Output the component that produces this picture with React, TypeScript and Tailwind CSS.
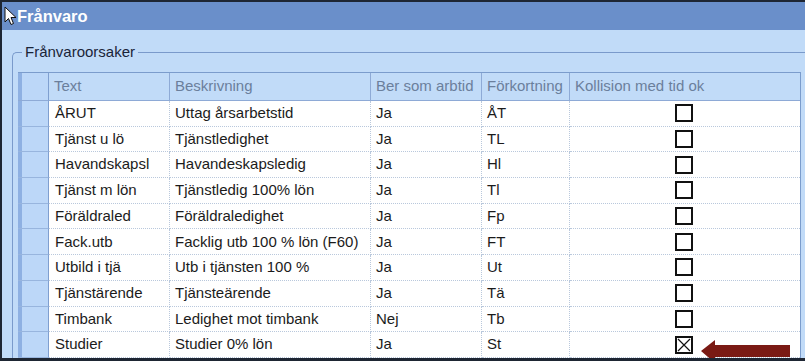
const ROWS = [
  { text: 'ÅRUT', desc: 'Uttag årsarbetstid', ber: 'Ja', fork: 'ÅT', ok: false },
  { text: 'Tjänst u lö', desc: 'Tjänstledighet', ber: 'Ja', fork: 'TL', ok: false },
  { text: 'Havandskapsl', desc: 'Havandeskapsledig', ber: 'Ja', fork: 'Hl', ok: false },
  { text: 'Tjänst m lön', desc: 'Tjänstledig 100% lön', ber: 'Ja', fork: 'Tl', ok: false },
  { text: 'Föräldraled', desc: 'Föräldraledighet', ber: 'Ja', fork: 'Fp', ok: false },
  { text: 'Fack.utb', desc: 'Facklig utb 100 % lön (F60)', ber: 'Ja', fork: 'FT', ok: false },
  { text: 'Utbild i tjä', desc: 'Utb i tjänsten 100 %', ber: 'Ja', fork: 'Ut', ok: false },
  { text: 'Tjänstärende', desc: 'Tjänsteärende', ber: 'Ja', fork: 'Tä', ok: false },
  { text: 'Timbank', desc: 'Ledighet mot timbank', ber: 'Nej', fork: 'Tb', ok: false },
  { text: 'Studier', desc: 'Studier 0% lön', ber: 'Ja', fork: 'St', ok: true },
];

const HEADERS = ['Text', 'Beskrivning', 'Ber som arbtid', 'Förkortning', 'Kollision med tid ok'];

function RowHeader({ header }: { header?: boolean }) {
  return (
    <div className={`flex h-full border-r border-[#7f9fd0] ${header ? 'border-b border-b-[#8eaad6]' : 'border-b border-b-[#98b5de]'}`}>
      <div className="w-[4px] h-full bg-[#8eb0e2]" />
      <div className="flex-1 h-full bg-[#bcd7f8]" />
    </div>
  );
}

function Checkbox({ checked }: { checked: boolean }) {
  return (
    <svg width="18" height="18" viewBox="0 0 18 18">
      <rect x="1" y="1" width="16" height="16" fill="white" stroke="#111" strokeWidth="2" />
      {checked && <path d="M3 3 L15 15 M15 3 L3 15" stroke="#111" strokeWidth="1.2" />}
    </svg>
  );
}

export default function App() {
  return (
    <div
      className="relative w-[805px] h-[361px] overflow-hidden bg-[#c1dbf8] border-t-2 border-l-2 border-b-[3px] border-[#1e2633]"
      style={{ fontFamily: '"Liberation Sans", Arial, sans-serif' }}
    >
      {/* title bar */}
      <div className="h-[28px] bg-[#6a8fca] flex items-center pl-[15px]">
        <span className="text-white font-bold text-[16.5px] leading-none">Frånvaro</span>
      </div>
      <svg className="absolute left-[2px] top-[4px]" width="14" height="20" viewBox="0 0 14 20">
        <path d="M1 1 L1 16 L4.5 12.5 L7 18.5 L9.5 17.5 L7 11.5 L12 11.5 Z" fill="white" stroke="#111" strokeWidth="1" strokeLinejoin="round" />
      </svg>

      {/* group box */}
      <div className="relative ml-[10px] mt-[22px] border-t border-l border-[#7a9acb] rounded-tl-[5px] pl-[5px] pt-[19px]">
        <span className="absolute left-[9px] -top-[10px] px-[3px] bg-[#c1dbf8] text-[15px] leading-[18px] text-[#1a2438]">
          Frånvaroorsaker
        </span>

        <div className="w-[783px] border-t border-r border-[#7b9ccc]">
          {/* header */}
          <div className="grid grid-cols-[31px_121px_201px_111px_88px_230px] h-[28px]">
            <RowHeader header />
            {HEADERS.map((h) => (
              <div
                key={h}
                className="flex items-center pl-[5px] border-r border-b border-[#8eaad6] text-[15px] text-[#6b7f9c] whitespace-nowrap overflow-hidden last:border-r-0"
              >
                {h}
              </div>
            ))}
          </div>

          {/* rows */}
          {ROWS.map((r) => (
            <div key={r.text} className="grid grid-cols-[31px_121px_201px_111px_88px_230px] h-[25.7px]">
              <RowHeader />
              <div className="bg-white flex items-center pl-[6px] border-r border-b border-dotted border-[#b9c8dc] text-[15px] text-[#1b1b1b] whitespace-nowrap overflow-hidden">
                {r.text}
              </div>
              <div className="bg-white flex items-center pl-[5px] border-r border-b border-dotted border-[#b9c8dc] text-[15px] text-[#1b1b1b] whitespace-nowrap overflow-hidden">
                {r.desc}
              </div>
              <div className="bg-white flex items-center pl-[5px] border-r border-b border-dotted border-[#b9c8dc] text-[15px] text-[#1b1b1b] whitespace-nowrap">
                {r.ber}
              </div>
              <div className="bg-white flex items-center pl-[5px] border-r border-b border-dotted border-[#b9c8dc] text-[15px] text-[#1b1b1b] whitespace-nowrap">
                {r.fork}
              </div>
              <div className="bg-white flex items-center justify-center pr-[2px] border-b border-dotted border-[#b9c8dc]">
                <Checkbox checked={r.ok} />
              </div>
            </div>
          ))}
        </div>
      </div>

      {/* annotation arrow */}
      <svg className="absolute left-[697px] top-[336px]" width="92" height="26" viewBox="0 0 92 26">
        <path d="M2 13 L16 2 L16 7 L91 7 L91 19 L16 19 L16 25 Z" fill="#7a1a14" />
      </svg>
    </div>
  );
}
